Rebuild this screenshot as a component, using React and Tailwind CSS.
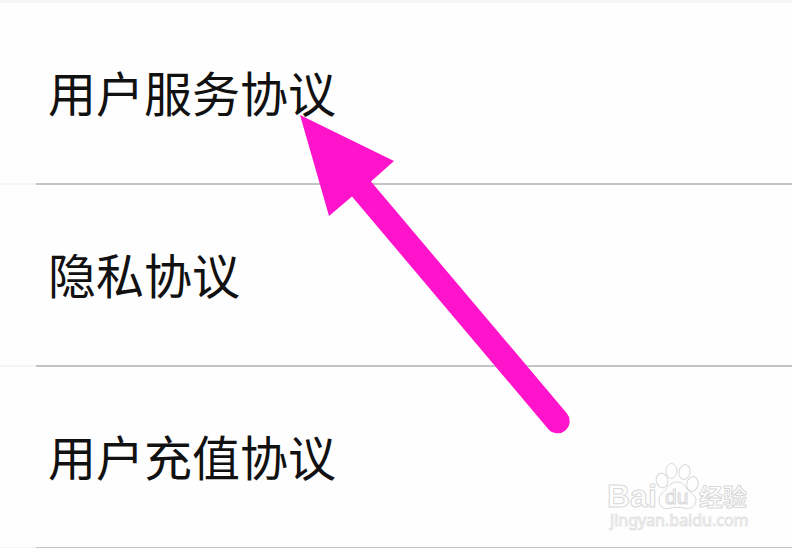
const agreements = ["用户服务协议", "隐私协议", "用户充值协议"];

function AgreementRow({ title }) {
  return (
    <li>
      <a href="#" className="flex h-[180px] items-center pb-1 pl-12 text-5xl text-[#111111]">
        {title}
      </a>
      <div className="flex h-0.5">
        <div className="w-9 bg-[#f5f5f5]" />
        <div className="flex-1 bg-[#c3c4c5]" />
      </div>
    </li>
  );
}

function Arrow() {
  return (
    <svg
      className="pointer-events-none absolute left-[300px] top-[115px]"
      width="272"
      height="322"
      viewBox="0 0 272 322"
      aria-hidden="true"
    >
      <path d="M0 0 94 46 71 66.5 266.8 298.2A12.2 12.2 0 0 1 248.2 314L52 81.5 29 101Z" fill="#ff14cc" />
    </svg>
  );
}

function Watermark() {
  return (
    <svg
      className="absolute bottom-2 right-9 font-['Liberation_Sans','Noto_Sans_CJK_SC',sans-serif]"
      width="150"
      height="80"
      viewBox="606 460 150 80"
      aria-label="Baidu 经验"
    >
      <g fill="#fefefe" stroke="#d8d8d8" strokeWidth="1" strokeLinejoin="round">
        <text x="607" y="507" fontSize="32" fontWeight="700">Bai</text>
        <ellipse cx="662" cy="480.5" rx="5.8" ry="7.3" transform="rotate(-12 662 480.5)" />
        <ellipse cx="671.5" cy="471" rx="5.5" ry="7.5" />
        <ellipse cx="684.5" cy="472" rx="5.5" ry="7.5" transform="rotate(12 684.5 472)" />
        <ellipse cx="692.5" cy="484" rx="5.8" ry="7.3" transform="rotate(12 692.5 484)" />
        <path d="M677 482C672 482 669 485 666 489C663 493 659 495 659 500C659 507 664 510 670 508C674 507 680 507 684 508C691 510 696 506 696 500C696 495 690 493 687 489C684 485 682 482 677 482Z" />
        <text x="665" y="504" fontSize="21">du</text>
        <text x="699" y="506" fontSize="24" fontWeight="700">经验</text>
      </g>
      <text
        className="font-['Noto_Sans',sans-serif]"
        x="610"
        y="526"
        fontSize="16"
        fill="#fefefe"
        stroke="#e3e3e3"
        strokeWidth="1"
      >
        jingyan.baidu.com
      </text>
    </svg>
  );
}

export default function App() {
  return (
    <main className="relative h-screen overflow-hidden bg-[#fefefe] font-['Noto_Sans_CJK_SC',sans-serif]">
      <div className="h-[3px] bg-[#f6f6f6]" />
      <ul>
        {agreements.map((title) => (
          <AgreementRow key={title} title={title} />
        ))}
      </ul>
      <Arrow />
      <Watermark />
    </main>
  );
}
